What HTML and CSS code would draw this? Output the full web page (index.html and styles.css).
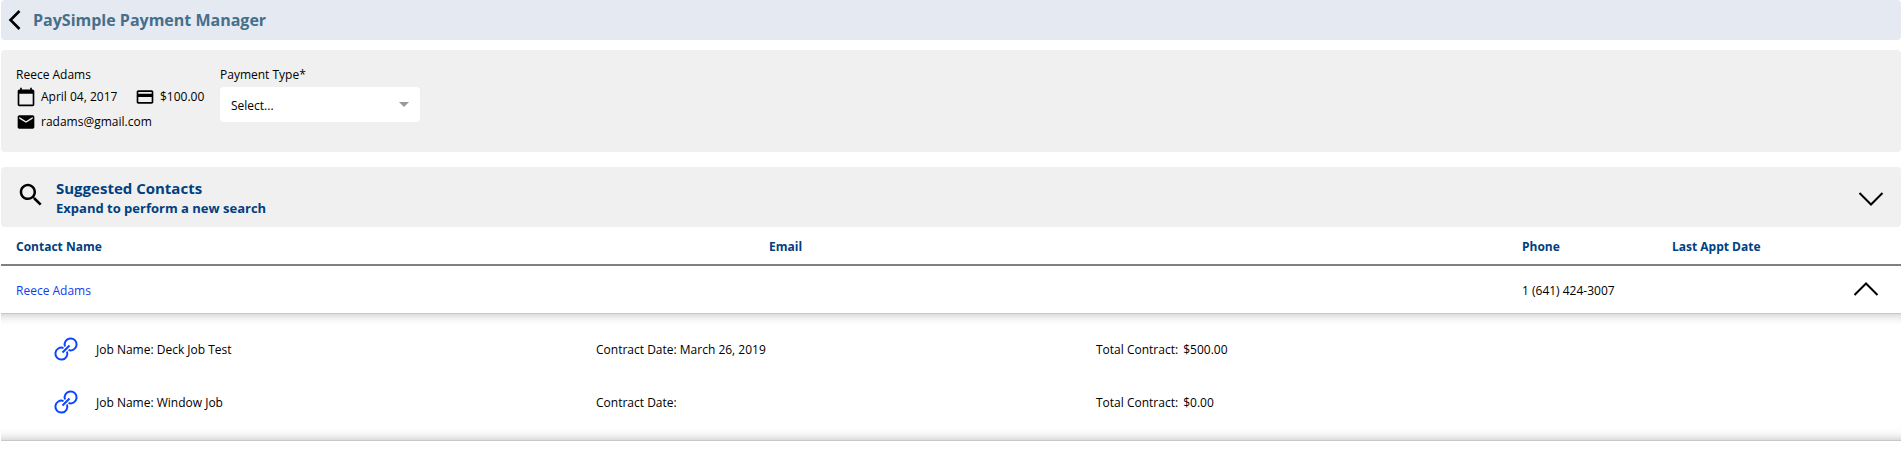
FILE: index.html
```html
<!DOCTYPE html>
<html lang="en">
<head>
    <meta charset="UTF-8">
    <meta name="viewport" content="width=device-width, initial-scale=1.0">
    <title>PaySimple Payment Manager</title>
    <link rel="stylesheet" href="styles.css">
</head>
<body>
    <header class="page-header">
        <button type="button" class="icon-button" aria-label="Back">
            <svg width="13" height="20" viewBox="0 0 13 20"><path d="M11.5 1 2.5 10l9 9" fill="none" stroke="#000" stroke-width="2.6"/></svg>
        </button>
        <h1>PaySimple Payment Manager</h1>
    </header>

    <section class="panel payment">
        <div class="payment-info">
            <div class="payer">Reece Adams</div>
            <div class="info-row">
                <span class="info-item info-date">
                    <svg width="20" height="20" viewBox="0 0 24 24"><path d="M20 3h-1V1h-2v2H7V1H5v2H4c-1.1 0-2 .9-2 2v16c0 1.1.9 2 2 2h16c1.1 0 2-.9 2-2V5c0-1.1-.9-2-2-2zm0 18H4V8h16v13z"/></svg>
                    April 04, 2017
                </span>
                <span class="info-item">
                    <svg width="20" height="20" viewBox="0 0 24 24"><path d="M20 4H4c-1.11 0-2 .89-2 2v12c0 1.11.89 2 2 2h16c1.11 0 2-.89 2-2V6c0-1.11-.89-2-2-2zm0 14H4v-6h16v6zm0-10H4V6h16v2z"/></svg>
                    $100.00
                </span>
            </div>
            <div class="info-row">
                <span class="info-item">
                    <svg width="20" height="20" viewBox="0 0 24 24"><path d="M20 4H4c-1.1 0-2 .9-2 2v12c0 1.1.9 2 2 2h16c1.1 0 2-.9 2-2V6c0-1.1-.9-2-2-2zm0 4l-8 5-8-5V6l8 5 8-5v2z"/></svg>
                    radams@gmail.com
                </span>
            </div>
        </div>
        <div class="payment-type">
            <label for="paymentType">Payment Type*</label>
            <div class="select-wrap">
                <select id="paymentType" name="payment_type">
                    <option value="">Select...</option>
                </select>
            </div>
        </div>
    </section>

    <section class="panel search">
        <svg class="search-icon" width="30" height="30" viewBox="0 0 24 24"><path d="M15.5 14h-.79l-.28-.27C15.41 12.59 16 11.11 16 9.5 16 5.91 13.09 3 9.5 3S3 5.91 3 9.5 5.91 16 9.5 16c1.61 0 3.09-.59 4.23-1.57l.27.28v.79l5 4.99L20.49 19l-4.99-5zm-6 0C7.01 14 5 11.99 5 9.5S7.01 5 9.5 5 14 7.01 14 9.5 11.99 14 9.5 14z"/></svg>
        <div class="search-text">
            <h2>Suggested Contacts</h2>
            <h3>Expand to perform a new search</h3>
        </div>
        <button type="button" class="icon-button" aria-label="Expand search">
            <svg width="26" height="16" viewBox="0 0 26 16"><path d="M1.5 2 13 13.5 24.5 2" fill="none" stroke="#000" stroke-width="2"/></svg>
        </button>
    </section>

    <table class="contacts">
        <colgroup>
            <col>
            <col>
            <col class="col-phone">
            <col class="col-appt">
            <col class="col-toggle">
        </colgroup>
        <thead>
            <tr>
                <th>Contact Name</th>
                <th>Email</th>
                <th>Phone</th>
                <th>Last Appt Date</th>
                <th></th>
            </tr>
        </thead>
        <tbody>
            <tr class="contact">
                <td><a href="#">Reece Adams</a></td>
                <td></td>
                <td>1 (641) 424-3007</td>
                <td></td>
                <td class="toggle">
                    <button type="button" class="icon-button" aria-label="Collapse jobs">
                        <svg width="26" height="16" viewBox="0 0 26 16"><path d="M1.5 14 13 2.5 24.5 14" fill="none" stroke="#000" stroke-width="2"/></svg>
                    </button>
                </td>
            </tr>
            <tr class="details">
                <td colspan="5">
                    <div class="details-box">
                        <table class="jobs">
                            <colgroup>
                                <col class="col-link">
                                <col class="col-job">
                                <col class="col-job">
                                <col>
                            </colgroup>
                            <tbody>
                                <tr>
                                    <td>
                                        <button type="button" class="icon-button" aria-label="Link Deck Job Test">
                                            <svg class="link-icon" width="24" height="24" viewBox="0 0 24 24"><path d="M11 9.5A6 6 0 1 1 14.5 13M13 14.5A6 6 0 1 1 9.5 11M8.5 15.5l7-7"/></svg>
                                        </button>
                                    </td>
                                    <td>Job Name: Deck Job Test</td>
                                    <td>Contract Date: March 26, 2019</td>
                                    <td>Total Contract: <span class="amount">$500.00</span></td>
                                </tr>
                                <tr>
                                    <td>
                                        <button type="button" class="icon-button" aria-label="Link Window Job">
                                            <svg class="link-icon" width="24" height="24" viewBox="0 0 24 24"><path d="M11 9.5A6 6 0 1 1 14.5 13M13 14.5A6 6 0 1 1 9.5 11M8.5 15.5l7-7"/></svg>
                                        </button>
                                    </td>
                                    <td>Job Name: Window Job</td>
                                    <td>Contract Date:</td>
                                    <td>Total Contract: <span class="amount">$0.00</span></td>
                                </tr>
                            </tbody>
                        </table>
                    </div>
                </td>
            </tr>
        </tbody>
    </table>
</body>
</html>
```
FILE: styles.css
```css
* {
    box-sizing: border-box;
}
body {
    margin: 0 2px 0 1px;
    font-family: "Open Sans", "Noto Sans", sans-serif;
    font-size: 12px;
    line-height: 20px;
    color: #000;
    background: #fff;
}
h1, h2, h3 {
    margin: 0;
}
svg {
    display: block;
    flex: none;
}
.icon-button {
    display: block;
    padding: 0;
    border: 0;
    background: none;
    cursor: pointer;
}
.page-header {
    display: flex;
    align-items: center;
    gap: 12px;
    height: 40px;
    padding: 0 7px;
    border-radius: 4px;
    background: #e5e9f2;
}
.page-header h1 {
    font-size: 16px;
    color: #456f8b;
}
.panel {
    display: flex;
    border-radius: 4px;
    background: #f0f0f0;
}

/* payment */
.payment {
    margin-top: 10px;
    padding: 14px 15px 18px;
}
.payment-info {
    width: 204px;
}
.payer, .payment-type label {
    display: block;
    height: 20px;
    line-height: 22px;
}
.info-row {
    display: flex;
    align-items: center;
    height: 25px;
}
.info-item {
    display: flex;
    align-items: center;
    gap: 5px;
}
.info-date {
    width: 119px;
}
.select-wrap {
    position: relative;
    width: 200px;
    margin-top: 3px;
}
.select-wrap::after {
    content: "";
    position: absolute;
    top: 15px;
    right: 11px;
    border: 5px solid transparent;
    border-top-color: #999;
    border-bottom: 0;
    pointer-events: none;
}
.select-wrap select {
    display: block;
    width: 100%;
    height: 35px;
    padding: 2px 11px 0;
    border: 0;
    border-radius: 4px;
    appearance: none;
    background: #fff;
    color: #000;
    font: inherit;
}

/* search */
.search {
    align-items: center;
    height: 60px;
    margin-top: 15px;
    padding: 3px 17px 0 15px;
}
.search-icon {
    align-self: flex-start;
    margin-top: 10px;
}
.search-text {
    flex: 1;
    padding: 0 10px 2px;
    color: #004080;
}
.search-text h2 {
    font-size: 15px;
}
.search-text h3 {
    font-size: 13px;
}

/* contacts */
table {
    width: 100%;
    table-layout: fixed;
    border-collapse: separate;
    border-spacing: 0;
}
td, th {
    padding: 2px 15px 0;
    text-align: left;
    vertical-align: middle;
}
.contacts th {
    height: 39px;
    border-bottom: 2px solid #808080;
    color: #004080;
}
.contact td {
    height: 48px;
    border-bottom: 1px solid #c8c8c8;
}
.contact a {
    color: #0f3cf0;
    text-decoration: none;
}
.col-phone, .col-appt {
    width: 150px;
}
.col-toggle {
    width: 94px;
}
.contact .toggle {
    padding: 0 22px 2px;
}
.toggle .icon-button {
    margin-left: auto;
}
.details > td {
    padding: 0;
}

/* jobs */
.details-box {
    padding: 9px 0 11px;
    border-bottom: 1px solid #c8c8c8;
    box-shadow: inset 0 12px 12px -12px #bbb, inset 0 -12px 12px -12px #bbb;
}
.jobs td {
    height: 53px;
    padding: 0;
}
.col-link {
    width: 95px;
}
.col-job {
    width: 500px;
}
.jobs .icon-button {
    margin: 0 0 2px 53px;
}
.link-icon {
    fill: none;
    stroke: #0a46ff;
    stroke-width: 2;
}
.amount {
    margin-left: 2px;
}
```
